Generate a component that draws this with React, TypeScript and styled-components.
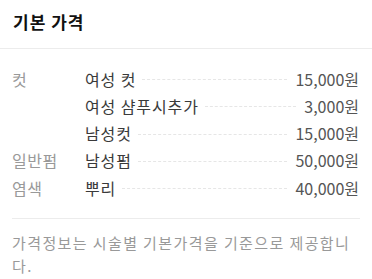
import styled, { createGlobalStyle } from "styled-components";

interface PriceItem {
  category?: string;
  name: string;
  price: string;
}

const items: PriceItem[] = [
  { category: "컷", name: "여성 컷", price: "15,000원" },
  { name: "여성 샴푸시추가", price: "3,000원" },
  { name: "남성컷", price: "15,000원" },
  { category: "일반펌", name: "남성펌", price: "50,000원" },
  { category: "염색", name: "뿌리", price: "40,000원" },
];

export default function App() {
  return (
    <>
      <GlobalStyle />
      <Card>
        <Header>기본 가격</Header>
        <List>
          {items.map((item, i) => (
            <Row key={i}>
              <Category>{item.category}</Category>
              <Name>{item.name}</Name>
              <Dots />
              <Price>{item.price}</Price>
            </Row>
          ))}
        </List>
        <Footer>가격정보는 시술별 기본가격을 기준으로 제공합니다.</Footer>
      </Card>
    </>
  );
}

const GlobalStyle = createGlobalStyle`
  html, body {
    margin: 0;
    padding: 0;
    background: #fff;
  }
  body {
    font-family: "Noto Sans CJK KR", "Noto Sans", sans-serif;
  }
`;

const Card = styled.div`
  width: 372px;
  background: #fff;
`;

const Header = styled.h2`
  margin: 0;
  padding: 0 13px;
  height: 48px;
  line-height: 44px;
  font-size: 17px;
  font-weight: 700;
  letter-spacing: 1px;
  color: #111;
  border-bottom: 1px solid #ececec;
`;

const List = styled.div`
  padding: 16px 12px 17px;
`;

const Row = styled.div`
  display: flex;
  align-items: center;
  height: 27.25px;
  font-size: 16px;
`;

const Category = styled.span`
  width: 73px;
  flex-shrink: 0;
  color: #999;
  letter-spacing: 0.5px;
`;

const Name = styled.span`
  color: #3a3a3a;
  white-space: nowrap;
  letter-spacing: 0.9px;
`;

const Dots = styled.span`
  flex: 1;
  margin: 2px 8px 0 6px;
  border-top: 1px dashed #e6e6e6;
`;

const Price = styled.span`
  color: #555;
  white-space: nowrap;
  padding-right: 1px;
`;

const Footer = styled.p`
  margin: 0 12px;
  padding: 12px 0 0;
  border-top: 1px solid #ececec;
  font-size: 15px;
  letter-spacing: 1.4px;
  line-height: 23px;
  color: #999;
`;
